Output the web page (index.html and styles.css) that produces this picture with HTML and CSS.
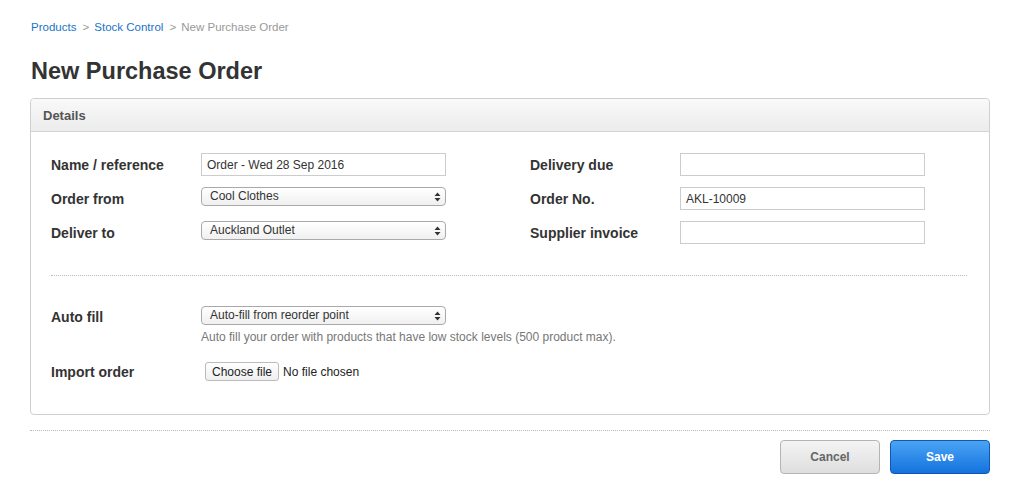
FILE: index.html
```html
<!DOCTYPE html>
<html>
<head>
<meta charset="utf-8">
<link rel="stylesheet" href="styles.css">
</head>
<body>
<div class="page">
  <nav class="crumbs">
    <a class="crumb-link">Products</a>
    <span class="sep">&gt;</span><a class="crumb-link">Stock Control</a>
    <span class="sep">&gt;</span><span class="crumb-current">New Purchase Order</span>
  </nav>
  <h1 class="title">New Purchase Order</h1>

  <section class="panel">
    <div class="panel-head">Details</div>
    <div class="panel-body">
      <div class="cols">
        <div class="col">
          <div class="row"><label class="lbl">Name / reference</label><input class="text" type="text" value="Order - Wed 28 Sep 2016"></div>
          <div class="row"><label class="lbl">Order from</label>
            <div class="sel"><span class="sel-text">Cool Clothes</span><svg class="arr" width="7" height="10" viewBox="0 0 7 10"><path d="M3.5 0.5 L6.5 4 L0.5 4 Z M3.5 9.5 L6.5 6 L0.5 6 Z" fill="#333"/></svg></div>
          </div>
          <div class="row"><label class="lbl">Deliver to</label>
            <div class="sel"><span class="sel-text">Auckland Outlet</span><svg class="arr" width="7" height="10" viewBox="0 0 7 10"><path d="M3.5 0.5 L6.5 4 L0.5 4 Z M3.5 9.5 L6.5 6 L0.5 6 Z" fill="#333"/></svg></div>
          </div>
        </div>
        <div class="col">
          <div class="row"><label class="lbl">Delivery due</label><input class="text" type="text" value=""></div>
          <div class="row"><label class="lbl">Order No.</label><input class="text" type="text" value="AKL-10009"></div>
          <div class="row"><label class="lbl">Supplier invoice</label><input class="text" type="text" value=""></div>
        </div>
      </div>
      <hr class="dots">
      <div class="row auto">
        <label class="lbl">Auto fill</label>
        <div class="field">
          <div class="sel"><span class="sel-text">Auto-fill from reorder point</span><svg class="arr" width="7" height="10" viewBox="0 0 7 10"><path d="M3.5 0.5 L6.5 4 L0.5 4 Z M3.5 9.5 L6.5 6 L0.5 6 Z" fill="#333"/></svg></div>
          <p class="help">Auto fill your order with products that have low stock levels (500 product max).</p>
        </div>
      </div>
      <div class="row import">
        <label class="lbl">Import order</label>
        <div class="file"><span class="file-btn">Choose file</span><span class="file-name">No file chosen</span></div>
      </div>
    </div>
  </section>

  <hr class="dots foot-sep">
  <div class="actions">
    <button class="btn cancel">Cancel</button>
    <button class="btn save">Save</button>
  </div>
</div>
</body>
</html>
```

FILE: styles.css
```css
* { box-sizing: border-box; }
html, body { margin: 0; padding: 0; background: #fff; }
body { font-family: "Liberation Sans", Arial, sans-serif; color: #333; }
.page { padding: 19px 41px 0 30px; }

.crumbs { font-size: 11.5px; line-height: 16px; padding-left: 1px; }
.crumb-link { color: #1a73c8; }
.sep { color: #999; margin: 0 5px 0 3px; }
.crumb-current { color: #999; }

.title { font-size: 23.5px; font-weight: bold; margin: 21px 0 0 1px; line-height: 30px; color: #333; }

.panel { margin-top: 12px; border: 1px solid #cfcfcf; border-radius: 4px; height: 317px; }
.panel-head { height: 33px; line-height: 33px; padding-left: 12px; font-size: 13px; font-weight: bold; color: #555;
  background: linear-gradient(#f9f9f9, #ececec); border-bottom: 1px solid #d4d4d4; border-radius: 4px 4px 0 0; }
.panel-body { padding: 21px 22px 0 20px; }

.cols { display: flex; gap: 84px; }
.col { display: flex; flex-direction: column; gap: 11px; }
.row { display: flex; align-items: center; }
.lbl { width: 150px; font-size: 14px; font-weight: bold; color: #333; }

.text { width: 245px; height: 23px; border: 1px solid #ccc; border-radius: 0; padding: 0 5px; font-family: inherit; font-size: 12px; color: #333; margin: 0; }

.sel { position: relative; width: 245px; height: 19px; border: 1px solid #a9a9a9; border-radius: 4px;
  background: linear-gradient(#fff, #f0f0f0); font-size: 12px; line-height: 17px; padding-left: 8px; color: #333; margin: 0 0 4px 0; }
.arr { position: absolute; right: 4px; top: 4px; }

.dots { border: 0; border-top: 1px dotted #bbb; margin: 31px 0 0 0; height: 0; }

.auto { align-items: flex-start; margin-top: 30px; }
.auto .lbl { padding-top: 3px; }
.field { display: flex; flex-direction: column; }
.field .sel { margin: 0; }
.help { margin: 5px 0 0 0; font-size: 12px; color: #777; line-height: 15px; }

.import { margin-top: 17px; }
.file { display: flex; align-items: center; font-size: 12px; padding-left: 4px; }
.file-btn { border: 1px solid #bbb; border-radius: 3px; background: linear-gradient(#fff, #efefef); padding: 1px 6px; height: 19px; line-height: 16px; color: #222; }
.file-name { margin-left: 4px; color: #222; }

.foot-sep { margin: 15px 0 0 0; }
.actions { display: flex; justify-content: flex-end; gap: 10px; margin-top: 9px; }
.btn { width: 100px; height: 34px; border-radius: 4px; font-family: inherit; font-size: 12px; font-weight: bold; }
.cancel { border: 1px solid #b4b4b4; background: linear-gradient(#f4f4f4, #dedede); color: #666; }
.save { border: 1px solid #1058b8; background: linear-gradient(#4aa4f4, #1472de); color: #fff; }
```
